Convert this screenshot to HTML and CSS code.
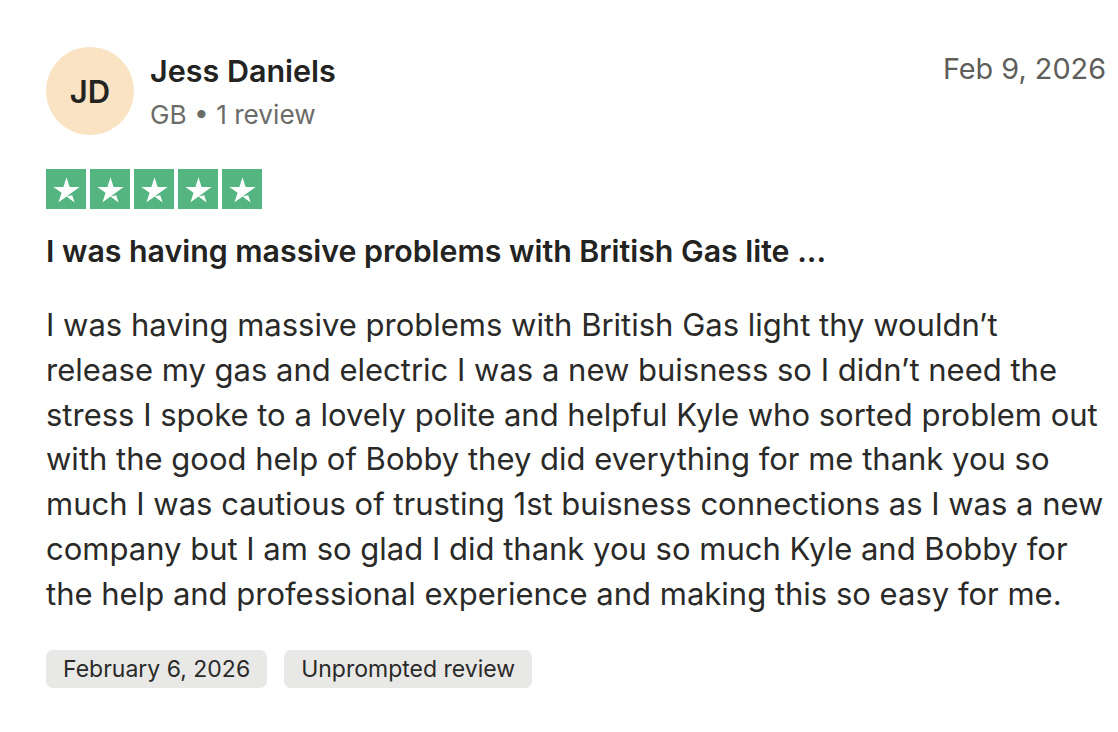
FILE: index.html
```html
<!DOCTYPE html>
<html lang="en">
<head>
<meta charset="utf-8">
<title>Review</title>
<link rel="stylesheet" href="styles.css">
</head>
<body>
<article class="review">
  <header class="review-header">
    <div class="consumer">
      <div class="avatar">JD</div>
      <div class="consumer-info">
        <div class="name">Jess Daniels</div>
        <div class="meta">GB • 1 review</div>
      </div>
    </div>
    <time class="date">Feb 9, 2026</time>
  </header>
  <div class="stars">
    <span class="star"><svg viewBox="0 0 24 24"><path d="M12 16.6l3.7-.95 1.55 4.8zM20.5 10.35h-6.5L12 4.1l-2 6.25H3.5l5.3 3.8-2 6.2 5.3-3.8 3.25-2.4z" fill="#fff"/></svg></span>
    <span class="star"><svg viewBox="0 0 24 24"><path d="M12 16.6l3.7-.95 1.55 4.8zM20.5 10.35h-6.5L12 4.1l-2 6.25H3.5l5.3 3.8-2 6.2 5.3-3.8 3.25-2.4z" fill="#fff"/></svg></span>
    <span class="star"><svg viewBox="0 0 24 24"><path d="M12 16.6l3.7-.95 1.55 4.8zM20.5 10.35h-6.5L12 4.1l-2 6.25H3.5l5.3 3.8-2 6.2 5.3-3.8 3.25-2.4z" fill="#fff"/></svg></span>
    <span class="star"><svg viewBox="0 0 24 24"><path d="M12 16.6l3.7-.95 1.55 4.8zM20.5 10.35h-6.5L12 4.1l-2 6.25H3.5l5.3 3.8-2 6.2 5.3-3.8 3.25-2.4z" fill="#fff"/></svg></span>
    <span class="star"><svg viewBox="0 0 24 24"><path d="M12 16.6l3.7-.95 1.55 4.8zM20.5 10.35h-6.5L12 4.1l-2 6.25H3.5l5.3 3.8-2 6.2 5.3-3.8 3.25-2.4z" fill="#fff"/></svg></span>
  </div>
  <h2 class="title">I was having massive problems with British Gas lite ...</h2>
  <p class="text">I was having massive problems with British Gas light thy wouldn’t release my gas and electric I was a new buisness so I didn’t need the stress I spoke to a lovely polite and helpful Kyle who sorted problem out with the good help of Bobby they did everything for me thank you so much I was cautious of trusting 1st buisness connections as I was a new company but I am so glad I did thank you so much Kyle and Bobby for the help and professional experience and making this so easy for me.</p>
  <div class="tags">
    <span class="tag">February 6, 2026</span>
    <span class="tag">Unprompted review</span>
  </div>
</article>
</body>
</html>
```

FILE: styles.css
```css
html, body {
  margin: 0;
  padding: 0;
  background: #fff;
}
body {
  font-family: Inter, "Noto Sans", sans-serif;
  color: #2a2a28;
}
.review {
  width: 1060px;
  padding: 47px 0 0 46px;
}
.review-header {
  display: flex;
  justify-content: space-between;
  align-items: flex-start;
}
.consumer {
  display: flex;
  align-items: flex-start;
  gap: 16px;
}
.avatar {
  width: 88px;
  height: 88px;
  border-radius: 50%;
  background: #fae3c2;
  display: flex;
  align-items: center;
  justify-content: center;
  font-size: 31px;
  font-weight: 600;
  color: #232321;
}
.consumer-info {
  display: flex;
  flex-direction: column;
  gap: 8px;
  margin-top: 5px;
}
.name {
  font-size: 30.5px;
  font-weight: 600;
  line-height: 38px;
  color: #232321;
}
.meta {
  font-size: 26.2px;
  line-height: 34px;
  color: #6b6b68;
}
.date {
  font-size: 28.8px;
  line-height: 36px;
  color: #5e5e5a;
  margin-top: 4px;
}
.stars {
  display: flex;
  gap: 4px;
  margin-top: 34px;
}
.star {
  width: 40px;
  height: 40px;
  background: #54b580;
  display: flex;
  align-items: center;
  justify-content: center;
}
.star svg {
  width: 37px;
  height: 37px;
  flex: none;
}
.title {
  margin: 22px 0 0;
  font-size: 30.3px;
  font-weight: 600;
  line-height: 40px;
  color: #232321;
}
.text {
  margin: 32px 0 0;
  font-size: 31px;
  line-height: 44.8px;
  color: #2a2a28;
}
.tags {
  display: flex;
  gap: 17px;
  margin-top: 33px;
}
.tag {
  background: #e8e8e7;
  border-radius: 7px;
  height: 38px;
  padding: 0 17px;
  display: flex;
  align-items: center;
  font-size: 23px;
  color: #2a2a28;
}
```
